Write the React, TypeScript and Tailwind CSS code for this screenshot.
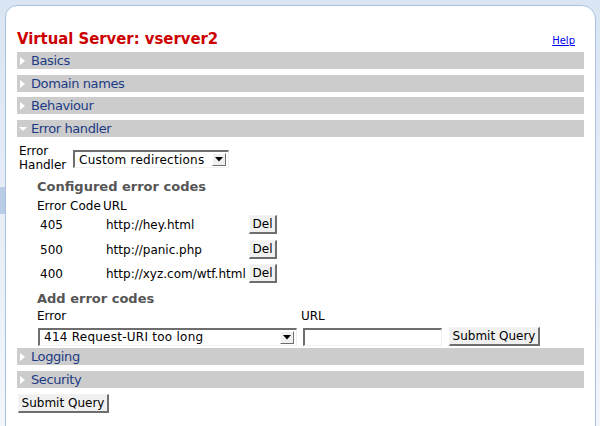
import React from "react";

const font = { fontFamily: '"DejaVu Sans", Verdana, sans-serif' };
const condensed = { fontFamily: '"DejaVu Sans Condensed", "DejaVu Sans", sans-serif' };

function Tri({ open }: { open?: boolean }) {
  return open ? (
    <svg width="8" height="8" viewBox="0 0 8 8" className="mr-[4px] ml-[2px]">
      <polygon points="0,2 8,2 4,6" fill="#ffffff" />
    </svg>
  ) : (
    <svg width="8" height="10" viewBox="0 0 8 10" className="mr-[4px] ml-[2px]">
      <polygon points="1,1 6,5 1,9" fill="#ffffff" />
    </svg>
  );
}

function Bar({ label, open, className = "" }: { label: string; open?: boolean; className?: string }) {
  return (
    <div className={"flex h-[17px] items-center bg-[#cccccc] " + className}>
      <Tri open={open} />
      <span className="text-[13px] leading-none tracking-[-0.4px] text-[#1c3b84]">{label}</span>
    </div>
  );
}

function Btn({ children, className = "" }: { children: React.ReactNode; className?: string }) {
  return (
    <div
      className={
        "flex items-center justify-center border-t border-l border-t-[#f4f4f4] border-l-[#f4f4f4] border-r-2 border-b-2 border-r-[#6e6e6e] border-b-[#6e6e6e] bg-[#f0f0f0] text-[12px] leading-none text-black " +
        className
      }
    >
      {children}
    </div>
  );
}

function Select({ value, className = "" }: { value: string; className?: string }) {
  return (
    <div
      className={
        "flex items-center border-t-2 border-l-2 border-t-[#6e6e6e] border-l-[#6e6e6e] border-r border-b border-r-[#f0f0f0] border-b-[#f0f0f0] bg-white pl-[4px] pr-[2px] " +
        className
      }
    >
      <span className="flex-1 text-[12px] leading-none tracking-[0.25px] text-black">{value}</span>
      <div className="flex h-[13px] w-[14px] items-center justify-center border-t border-l border-t-[#ffffff] border-l-[#ffffff] border-r border-b border-r-[#6e6e6e] border-b-[#6e6e6e] bg-[#f0f0f0]">
        <svg width="8" height="5" viewBox="0 0 8 5">
          <polygon points="0,0 8,0 4,4.5" fill="#000" />
        </svg>
      </div>
    </div>
  );
}

export default function App() {
  const rows = [
    ["405", "http://hey.html"],
    ["500", "http://panic.php"],
    ["400", "http://xyz.com/wtf.html"],
  ];
  return (
    <div
      style={font}
      className="relative h-[426px] w-[600px] overflow-hidden bg-gradient-to-b from-[#dae5f3] to-[#f3f6fb] pt-[5px] pl-[5px]"
    >
      <div className="absolute left-0 top-[187px] h-[27px] w-[5px] bg-[#b9cce5]" />
      <div className="h-[430px] w-[591px] rounded-tl-[12px] rounded-tr-[14px] border border-[#a9c0df] bg-white pl-[11px] pr-[11px]">
        <div className="flex h-[46px] items-end justify-between pb-[5px]">
          <h1
            style={condensed}
            className="text-[16.5px] font-bold leading-none [font-stretch:condensed] text-[#cc0000]"
          >
            Virtual Server: vserver2
          </h1>
          <a href="#" className="mb-[1px] mr-[9px] text-[10px] leading-none text-[#0000ee] underline">
            Help
          </a>
        </div>
        <Bar label="Basics" />
        <Bar label="Domain names" className="mt-[6px]" />
        <Bar label="Behaviour" className="mt-[5px]" />
        <Bar label="Error handler" open className="mt-[6px]" />
        <div className="pl-[2px] text-[12px] text-black">
          <div className="mt-[7px] flex items-start">
            <div className="w-[54px] text-[12px] leading-[14px]">
              Error
              <br />
              Handler
            </div>
            <Select value="Custom redirections" className="mt-[6px] h-[18px] w-[156px]" />
          </div>
          <div className="pl-[18px]">
            <div className="mt-[8px] text-[13px] font-bold leading-none text-[#555555]">Configured error codes</div>
            <div className="mt-[7px] flex leading-none">
              <span className="w-[66px]">Error Code</span>
              <span>URL</span>
            </div>
            {rows.map(([c, u], i) => (
              <div
                key={c}
                className={"flex h-[19px] items-center " + (i === 0 ? "mt-[3px]" : i === 1 ? "mt-[6px]" : "mt-[5px]")}
              >
                <span className="w-[69px] pl-[3px]">{c}</span>
                <span className="w-[143px]">{u}</span>
                <Btn className="h-[19px] w-[28px]">Del</Btn>
              </div>
            ))}
            <div className="mt-[9px] text-[13px] font-bold leading-none text-[#555555]">Add error codes</div>
            <div className="mt-[5px] flex leading-none">
              <span className="w-[264px]">Error</span>
              <span>URL</span>
            </div>
            <div className="mt-[5px] flex items-center">
              <Select value="414 Request-URI too long" className="ml-[1px] h-[18px] w-[259px]" />
              <div className="ml-[6px] h-[18px] w-[139px] border-t-2 border-l-2 border-t-[#6e6e6e] border-l-[#6e6e6e] border-r border-b border-r-[#f0f0f0] border-b-[#f0f0f0] bg-white" />
              <Btn className="ml-[7px] h-[19px] w-[91px]">Submit Query</Btn>
            </div>
          </div>
        </div>
        <Bar label="Logging" className="mt-[2px]" />
        <Bar label="Security" className="mt-[6px]" />
        <Btn className="ml-[1px] mt-[6px] h-[19px] w-[91px]">Submit Query</Btn>
      </div>
    </div>
  );
}
